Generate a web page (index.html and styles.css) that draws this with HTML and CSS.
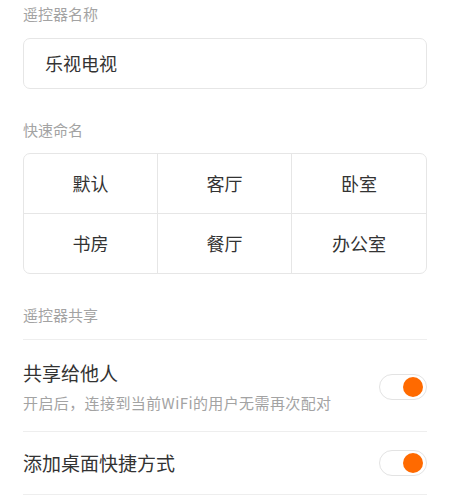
FILE: index.html
```html
<!DOCTYPE html>
<html lang="zh-CN">
<head>
    <meta charset="UTF-8">
    <meta name="viewport" content="width=device-width, initial-scale=1.0">
    <title>遥控器设置</title>
    <link rel="stylesheet" href="styles.css">
</head>
<body>
    <div class="pagina">
        <p class="rotulo primeiro">遥控器名称</p>
        <div class="campo">乐视电视</div>

        <p class="rotulo">快速命名</p>
        <div class="grade">
            <div class="celula">默认</div>
            <div class="celula">客厅</div>
            <div class="celula">卧室</div>
            <div class="celula">书房</div>
            <div class="celula">餐厅</div>
            <div class="celula">办公室</div>
        </div>

        <p class="rotulo">遥控器共享</p>
        <div class="linha">
            <div class="textos">
                <div class="titulo">共享给他人</div>
                <div class="descricao">开启后，连接到当前WiFi的用户无需再次配对</div>
            </div>
            <div class="chave ligada"><span class="bolinha"></span></div>
        </div>
        <div class="linha curta">
            <div class="textos">
                <div class="titulo">添加桌面快捷方式</div>
            </div>
            <div class="chave ligada"><span class="bolinha"></span></div>
        </div>
    </div>
</body>
</html>
```

FILE: styles.css
```css
body {
    margin: 0;
    background-color: #fff;
    font-family: "Noto Sans CJK SC", "Noto Sans", sans-serif;
    color: #333;
}

.pagina {
    width: 404px;
    margin-left: 23px;
    padding-top: 4px;
}

.rotulo {
    margin: 31px 0 0;
    font-size: 15px;
    line-height: 20px;
    color: #a3a3a3;
}
.rotulo.primeiro {
    margin-top: 0;
}

.campo {
    margin-top: 14px;
    height: 49px;
    border: 1px solid #e6e6e6;
    border-radius: 7px;
    padding-left: 21px;
    font-size: 18px;
    line-height: 49px;
    color: #333;
}

.grade {
    margin-top: 13px;
    display: grid;
    grid-template-columns: repeat(3, 1fr);
    border: 1px solid #e6e6e6;
    border-radius: 7px;
    overflow: hidden;
}
.celula {
    height: 59px;
    line-height: 59px;
    text-align: center;
    font-size: 18px;
    border-right: 1px solid #e6e6e6;
    border-bottom: 1px solid #e6e6e6;
}
.celula:nth-child(3n) {
    border-right: none;
}
.celula:nth-child(n+4) {
    border-bottom: none;
}

.rotulo + .linha {
    margin-top: 14px;
    border-top: 1px solid #eee;
}

.linha {
    display: flex;
    align-items: center;
    justify-content: space-between;
    padding: 20px 0 18px;
    border-bottom: 1px solid #eee;
}
.linha.curta {
    padding: 18px 0;
}

.titulo {
    font-size: 19px;
    line-height: 26px;
    color: #333;
}
.descricao {
    margin-top: 7px;
    font-size: 15px;
    line-height: 20px;
    letter-spacing: 0.4px;
    color: #a3a3a3;
}

.chave {
    box-sizing: border-box;
    width: 48px;
    height: 26px;
    border: 1px solid #e3e3e3;
    border-radius: 13px;
    background: #fff;
    display: flex;
    align-items: center;
    justify-content: flex-end;
    padding-right: 3px;
}
.bolinha {
    width: 20px;
    height: 20px;
    border-radius: 50%;
    background-color: #ff6a00;
}
```
